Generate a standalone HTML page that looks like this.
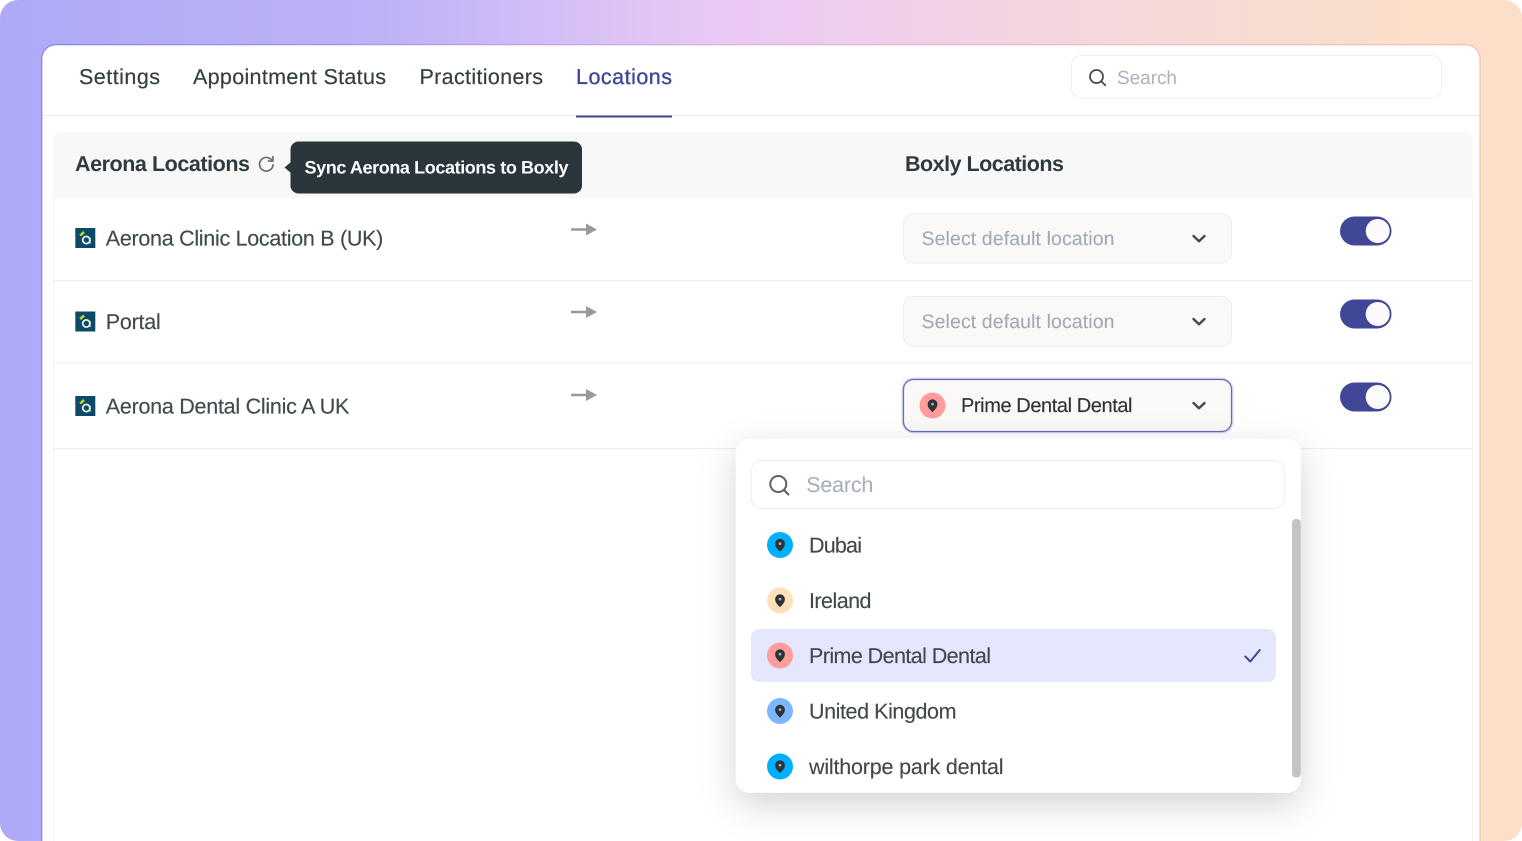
<!DOCTYPE html>
<html lang="en">
<head>
<meta charset="utf-8">
<title>Aerona Locations</title>
<style>
html,body{margin:0;padding:0;width:1522px;height:841px;overflow:hidden;background:#fff}
#bg{position:absolute;left:0;top:0;width:1522px;height:841px;border-radius:18px;background:linear-gradient(90deg,#aeaaf8 0%,#bdb2f6 25%,#e9c9f5 47%,#f4d8dc 72%,#fbdfc9 93%,#fbdfc9 100%)}
svg{position:absolute;left:0;top:0}
text{font-family:"Liberation Sans",sans-serif;text-rendering:geometricPrecision}
.tab{font-size:21.5px;fill:#343f44;stroke:#343f44;stroke-width:.2}
.h{font-size:21.5px;font-weight:bold;fill:#2f3a3f}
.row{font-size:21.5px;fill:#3f4a4f;stroke:#3f4a4f;stroke-width:.15}
.ph{font-size:19.5px;fill:#a2a9b5;stroke:#a2a9b5;stroke-width:.1}
.it{font-size:21.5px;fill:#41494d;stroke:#41494d;stroke-width:.15}
</style>
</head>
<body>
<div id="bg"></div>
<svg width="1522" height="841" viewBox="0 0 1522 841">
<defs>
<linearGradient id="b" x1="0" x2="1" y1="0" y2="0">
<stop offset="0" stop-color="#7d74ee"/><stop offset=".5" stop-color="#e0a8d8"/><stop offset="1" stop-color="#f7b89c"/>
</linearGradient>
<filter id="sh" x="-20%" y="-20%" width="140%" height="150%">
<feDropShadow dx="0" dy="12" stdDeviation="18" flood-color="#000" flood-opacity=".17"/>
</filter>
<g id="pin"><path d="M0-6.200a4.900 4.900 0 0 0-4.900 4.900C-4.900 2.200-1.600 5 0 6.600 1.600 5 4.900 2.200 4.900-1.300A4.900 4.900 0 0 0 0-6.200z" fill="#2a3338"/><circle cx="0" cy="-1.400" r="1.400" fill="#fff" fill-opacity=".6"/></g>
<g id="logo"><rect x="0" y="0" width="20" height="20" fill="#0d4a66"/><path d="M4 6.500 8 3l1.600 2-3.900 3.500z" fill="#b9d534"/><circle cx="11" cy="12" r="3.600" fill="none" stroke="#e6eff1" stroke-width="1.800"/><path d="M14.600 9.500v6" stroke="#e6eff1" stroke-width="1.500"/></g>
<g id="arrow"><path d="M0 0h17" stroke="#9a9a9a" stroke-width="2.600"/><path d="M15-6 26 0 15 6z" fill="#9a9a9a"/></g>
<g id="chev"><path d="M-5.500-2.500 0 2.800 5.500-2.500" fill="none" stroke="#434b4e" stroke-width="2.400" stroke-linecap="round" stroke-linejoin="round"/></g>
<g id="tog"><rect x="0" y="0" width="51.500" height="29" rx="14.500" fill="#3f4796"/><circle cx="37.700" cy="14.500" r="12" fill="#fbfbfc"/></g>
</defs>

<!-- card -->
<path d="M41.800 860V58.800a14 14 0 0 1 14-14H1466a14 14 0 0 1 14 14V860z" fill="#fff" stroke="url(#b)" stroke-width="1"/>
<rect x="42.500" y="115" width="1437" height="1" fill="#eaecee"/>
<rect x="576" y="115.500" width="96" height="2" fill="#3f4796"/>

<!-- tabs -->
<text class="tab" x="79" y="84" textLength="81" lengthAdjust="spacing">Settings</text>
<text class="tab" x="193" y="84" textLength="193" lengthAdjust="spacing">Appointment Status</text>
<text class="tab" x="419.500" y="84" textLength="123.500" lengthAdjust="spacing">Practitioners</text>
<text class="tab" x="576" y="84" textLength="96" lengthAdjust="spacing" style="fill:#3f4796;stroke:#3f4796;stroke-width:.35">Locations</text>

<!-- top search -->
<rect x="1071.500" y="55.500" width="370" height="42.500" rx="10" fill="#fff" stroke="#eceef0"/>
<circle cx="1096.500" cy="76.500" r="6.500" fill="none" stroke="#434b4e" stroke-width="1.800"/>
<path d="M1101.500 81.500l3.800 3.800" stroke="#434b4e" stroke-width="1.800" stroke-linecap="round"/>
<text x="1117" y="84" font-size="19" fill="#abb2c0" textLength="60" lengthAdjust="spacing">Search</text>

<!-- table -->
<path d="M53 198V140a8 8 0 0 1 8-8H1465a8 8 0 0 1 8 8v58z" fill="#f8f8f8"/>
<path d="M53.500 198V841M1472.500 198V841" stroke="#f3f3f4" stroke-width="1" fill="none"/>
<rect x="54" y="280" width="1418" height="1.200" fill="#efeff0"/>
<rect x="54" y="362.500" width="1418" height="1.200" fill="#efeff0"/>
<rect x="54" y="448" width="1418" height="1.200" fill="#efeff0"/>

<text class="h" x="75" y="171" textLength="175" lengthAdjust="spacing">Aerona Locations</text>
<text class="h" x="905" y="171" textLength="159" lengthAdjust="spacing">Boxly Locations</text>

<!-- refresh -->
<path d="M271.800 160.200a6.800 6.800 0 1 0 1.300 4.600" fill="none" stroke="#666c6f" stroke-width="1.700" stroke-linecap="round"/>
<path d="M272.900 156.500v4.600h-4.600" fill="none" stroke="#666c6f" stroke-width="1.600" stroke-linecap="round" stroke-linejoin="round"/>

<!-- tooltip -->
<path d="M284.500 167.500l6.500-5.500v11z" fill="#2a363b"/>
<rect x="290.500" y="141.500" width="291.500" height="52" rx="8" fill="#2a363b"/>
<text x="304.500" y="173.500" font-size="18" font-weight="bold" fill="#fff" textLength="264" lengthAdjust="spacing">Sync Aerona Locations to Boxly</text>

<!-- rows -->
<use href="#logo" x="75.300" y="228"/>
<text class="row" x="105.800" y="245.700" textLength="277.500" lengthAdjust="spacing">Aerona Clinic Location B (UK)</text>
<use href="#logo" x="75.300" y="311.500"/>
<text class="row" x="105.800" y="329" textLength="55" lengthAdjust="spacing">Portal</text>
<use href="#logo" x="75.300" y="396"/>
<text class="row" x="105.800" y="413.700" textLength="243.500" lengthAdjust="spacing">Aerona Dental Clinic A UK</text>

<use href="#arrow" x="571" y="229.500"/>
<use href="#arrow" x="571" y="312"/>
<use href="#arrow" x="571" y="395"/>

<!-- selects -->
<rect x="903.500" y="213.800" width="328" height="49.200" rx="10" fill="#faf9f8" stroke="#efeeec"/>
<text class="ph" x="921.500" y="245" textLength="193" lengthAdjust="spacing">Select default location</text>
<use href="#chev" x="1199" y="238.500"/>
<rect x="903.500" y="296.500" width="328" height="50" rx="10" fill="#faf9f8" stroke="#efeeec"/>
<text class="ph" x="921.500" y="328" textLength="193" lengthAdjust="spacing">Select default location</text>
<use href="#chev" x="1199" y="321.500"/>
<rect x="903.500" y="379.500" width="328" height="52" rx="10" fill="#faf9f8" stroke="#d3d4f7" stroke-width="3.800"/>
<rect x="903.500" y="379.500" width="328" height="52" rx="10" fill="#faf9f8" stroke="#666cb2" stroke-width="1.200"/>
<circle cx="932.500" cy="405.500" r="13" fill="#ff9c9c"/>
<use href="#pin" x="932.500" y="405.500"/>
<text x="961" y="412" font-size="20" fill="#2d3336" stroke="#2d3336" stroke-width=".15" textLength="171.500" lengthAdjust="spacing">Prime Dental Dental</text>
<use href="#chev" x="1199" y="405.500"/>

<!-- toggles -->
<use href="#tog" x="1340" y="216.500"/>
<use href="#tog" x="1340" y="299.500"/>
<use href="#tog" x="1340" y="382.500"/>

<!-- dropdown -->
<rect x="735.800" y="438.800" width="565" height="354" rx="14" fill="#fff" filter="url(#sh)"/>
<rect x="751.300" y="460.500" width="533" height="48" rx="10" fill="#fff" stroke="#eceef0"/>
<circle cx="778.300" cy="484" r="8" fill="none" stroke="#5c6265" stroke-width="2"/>
<path d="M784.300 490.200l4 4.200" stroke="#5c6265" stroke-width="2.200" stroke-linecap="round"/>
<text x="806.300" y="492" font-size="21.500" fill="#a5acbb" textLength="67" lengthAdjust="spacing">Search</text>

<rect x="751" y="629" width="525" height="53" rx="8" fill="#e5e7fe"/>
<path d="M1245.300 656.500l5 5 9.500-11.500" fill="none" stroke="#3f4796" stroke-width="2" stroke-linecap="round" stroke-linejoin="round"/>

<circle cx="780" cy="545" r="13" fill="#00b0ff"/><use href="#pin" x="780" y="545"/>
<text class="it" x="809" y="552.700" textLength="53" lengthAdjust="spacing">Dubai</text>
<circle cx="780" cy="600.500" r="13" fill="#ffe0b8"/><use href="#pin" x="780" y="600.500"/>
<text class="it" x="809" y="608" textLength="62.500" lengthAdjust="spacing">Ireland</text>
<circle cx="780" cy="655.500" r="13" fill="#ff9c9c"/><use href="#pin" x="780" y="655.500"/>
<text class="it" x="809" y="663" textLength="182" lengthAdjust="spacing">Prime Dental Dental</text>
<circle cx="780" cy="711" r="13" fill="#7eb6fb"/><use href="#pin" x="780" y="711"/>
<text class="it" x="809" y="718.300" textLength="147.500" lengthAdjust="spacing">United Kingdom</text>
<circle cx="780" cy="766.500" r="13" fill="#00b0ff"/><use href="#pin" x="780" y="766.500"/>
<text class="it" x="809" y="774" textLength="194.500" lengthAdjust="spacing">wilthorpe park dental</text>

<rect x="1292" y="519" width="8.800" height="258.500" rx="4" fill="#c4c4c4"/>
</svg>
</body>
</html>
